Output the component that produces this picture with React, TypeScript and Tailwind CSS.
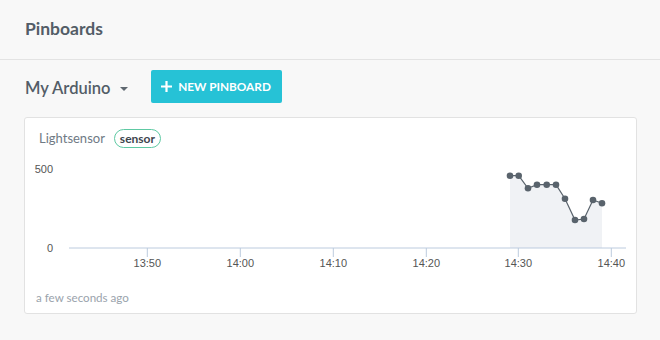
import React from 'react';

const points: [number, number][] = [
  [485, 19.7],
  [493.7, 19.7],
  [503, 32.3],
  [512, 28.7],
  [521.7, 28.7],
  [531, 28.7],
  [540, 42.7],
  [550, 64],
  [559, 63],
  [568, 44],
  [577, 47.3],
];

const ticks = [
  { x: 122.3, label: '13:50' },
  { x: 215.3, label: '14:00' },
  { x: 308.3, label: '14:10' },
  { x: 401.3, label: '14:20' },
  { x: 493.3, label: '14:30' },
  { x: 586.3, label: '14:40' },
];

function SensorChart() {
  const line = points.map((p, i) => `${i === 0 ? 'M' : 'L'}${p[0]},${p[1]}`).join(' ');
  const area = `${line} L577,92 L485,92 Z`;

  return (
    <svg width="611" height="124" className="block" style={{ fontFamily: '"Liberation Sans", Arial, sans-serif' }}>
      <path d={area} fill="#f0f2f5" />
      <text x="28" y="17" textAnchor="end" fontSize="11" fill="#555">500</text>
      <text x="28" y="96" textAnchor="end" fontSize="11" fill="#555">0</text>
      <line x1="44" y1="92" x2="601" y2="92" stroke="#bccbde" strokeWidth="1" />
      {ticks.map((t) => (
        <g key={t.label}>
          <line x1={t.x} y1="92" x2={t.x} y2="101" stroke="#bccbde" strokeWidth="1" />
          <text x={t.x} y="111" textAnchor="middle" fontSize="11" fill="#555">{t.label}</text>
        </g>
      ))}
      <path d={line} fill="none" stroke="#59636c" strokeWidth="1.2" />
      {points.map((p, i) => (
        <circle key={i} cx={p[0]} cy={p[1]} r="3.3" fill="#59636c" />
      ))}
    </svg>
  );
}

export default function App() {
  return (
    <div className="w-[660px] h-[340px] bg-[#f8f8f8] overflow-hidden" style={{ fontFamily: 'Lato, "Open Sans", sans-serif' }}>
      <div className="h-[60px] px-[25px] flex items-center border-b border-[#e3e3e3]">
        <h1 className="text-[17.5px] font-bold text-[#535d67]">Pinboards</h1>
      </div>

      <div className="mt-[10px] h-[33px] px-[25px] flex items-center">
        <button className="flex items-center text-[16.5px] font-semibold text-[#535d67] mt-[3px]">
          My Arduino
          <span className="ml-[9px] mt-[2px] w-0 h-0 border-l-[4px] border-r-[4px] border-t-[4px] border-l-transparent border-r-transparent border-t-[#5f6870]" />
        </button>
        <button className="ml-[23px] h-[33px] w-[131px] rounded-[2px] bg-[#26c2d6] text-white flex items-center justify-center gap-[6px] text-[11.8px] font-bold">
          <svg width="11" height="11" viewBox="0 0 11 11">
            <path d="M5.5 0v11M0 5.5h11" stroke="white" strokeWidth="2.2" />
          </svg>
          NEW PINBOARD
        </button>
      </div>

      <div className="mt-[14px] ml-[24px] w-[613px] h-[197px] bg-white border border-[#e2e2e2] rounded-[3px]">
        <div className="h-[38px] pt-[11px] pl-[14px] flex items-start gap-[9px]">
          <span className="text-[13px] text-[#6f7a85] leading-[19px]">Lightsensor</span>
          <span className="h-[19px] px-[5px] rounded-full border border-[#5ec9a3] text-[12px] font-bold text-[#3d454d] leading-[17px]">
            sensor
          </span>
        </div>
        <SensorChart />
        <div className="pt-[11px] pl-[11px] text-[11.6px] leading-[14px] text-[#9aa3ac]">a few seconds ago</div>
      </div>
    </div>
  );
}
